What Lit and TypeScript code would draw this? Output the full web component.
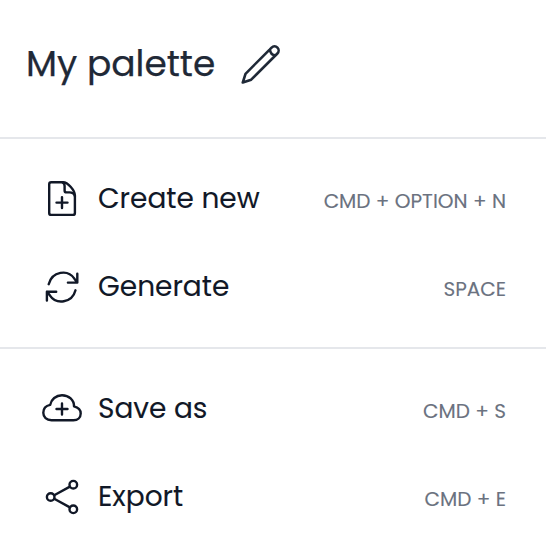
import { LitElement, html, svg, css } from "lit";
import { customElement } from "lit/decorators.js";

const icons = {
  file: svg`<path d="M21 3.3H9.2Q7.2 3.3 7.2 5.3V33.9Q7.2 35.9 9.2 35.9H30.9Q32.9 35.9 32.9 33.9V16.5C32.9 11.5 26 3.3 21 3.3"/><path d="M20.5 3.3Q22.6 4.2 22.6 7V11.4Q22.6 13.4 24.6 13.4H27.5Q31.6 13.4 32.9 17M20 18.1V29.1M14.5 23.6H25.5"/>`,
  refresh: svg`<path d="M6.7 17.2C10.1 4.3 25.9 1.9 32.4 11.7L35.3 15.5M35.3 6.8V15.6H25.9M33.5 23.3C30.1 36.2 14.3 38 7.8 28.3L4.9 24.6M4.9 33.5V24.7H14.2"/>`,
  cloud: svg`<path d="M9.5 31.2C4.5 31.2 1.3 28 1.3 23.7C1.3 19.7 4.1 16.7 8.2 15.9C9.1 10.5 14 6.2 20 6.2C26.8 6.2 32.2 11 32 17.4C36.2 18.4 38.7 20.9 38.7 24.5C38.7 28.4 35.8 31.2 31.4 31.2ZM20 14.5V25.5M14.5 20H25.5"/>`,
  share: svg`<circle cx="8.7" cy="20" r="3.8"/><circle cx="31.3" cy="7.7" r="3.8"/><circle cx="31.3" cy="32.3" r="3.8"/><path d="M12.2 18.2L27.9 9.6M12.2 21.8L27.9 30.4"/>`,
};

const groups = [
  [
    { icon: icons.file, label: "Create new", keys: "CMD + OPTION + N" },
    { icon: icons.refresh, label: "Generate", keys: "SPACE" },
  ],
  [
    { icon: icons.cloud, label: "Save as", keys: "CMD + S" },
    { icon: icons.share, label: "Export", keys: "CMD + E" },
  ],
];

@customElement("app-root")
export class AppRoot extends LitElement {
  static styles = css`
    :host {
      display: block;
      box-sizing: border-box;
      height: 550px;
      overflow: hidden;
      background: #fff;
      color: #111827;
      font-family: Poppins, Inter, sans-serif;
      white-space: nowrap;
    }
    header {
      box-sizing: border-box;
      height: 137px;
      padding: 36px 26px 0;
      display: flex;
      align-items: flex-start;
      color: #1f2937;
    }
    h1 {
      margin: 0;
      width: 215px;
      font-size: 36px;
      line-height: 56px;
      font-weight: 400;
      -webkit-text-stroke: 0.25px currentColor;
    }
    header svg {
      margin-top: 8px;
      stroke-width: 2.6;
    }
    svg {
      display: block;
      flex: none;
      width: 40px;
      height: 40px;
      fill: none;
      stroke: currentColor;
      stroke-width: 2.4;
      stroke-linecap: round;
      stroke-linejoin: round;
    }
    section {
      border-top: 2px solid #e5e7eb;
      padding: 16px 40px 16px 42px;
    }
    .row {
      height: 88px;
      display: flex;
      align-items: center;
    }
    .label {
      margin-left: 16px;
      font-size: 28px;
      line-height: 40px;
      -webkit-text-stroke: 0.1px currentColor;
    }
    .keys {
      margin-left: auto;
      padding-top: 4px;
      font-size: 20px;
      line-height: 28px;
      color: #6b7280;
      -webkit-text-stroke: 0.1px currentColor;
    }
  `;

  render() {
    return html`
      <header>
        <h1>My palette</h1>
        <svg viewBox="0 0 40 40" aria-hidden="true">
          <path d="M30.6 3.6L4.5 29.8L1.8 38.5L10.2 35.7L36.4 9.5A4.1 4.1 0 0 0 30.6 3.6ZM28.9 5.6Q29.4 10.7 34.4 11.4"/>
        </svg>
      </header>
      ${groups.map((rows) => html`<section>
        ${rows.map((r) => html`<div class="row">
          <svg viewBox="0 0 40 40" aria-hidden="true">${r.icon}</svg>
          <span class="label">${r.label}</span>
          <span class="keys">${r.keys}</span>
        </div>`)}
      </section>`)}
    `;
  }
}
